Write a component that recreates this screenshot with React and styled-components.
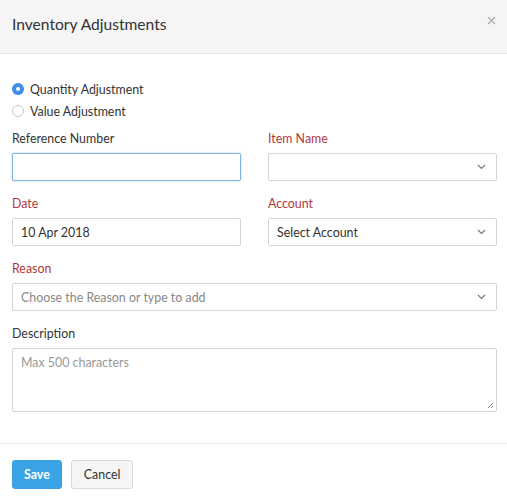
import React from "react";
import styled, { createGlobalStyle } from "styled-components";

const Global = createGlobalStyle`
  html, body { margin: 0; padding: 0; background: #fff; }
  body { font-family: Lato, "Open Sans", "Liberation Sans", sans-serif; color: #333; }
  * { box-sizing: border-box; }
`;

const Modal = styled.div`
  width: 507px;
  height: 501px;
  background: #fff;
  display: flex;
  flex-direction: column;
  overflow: hidden;
`;

const Header = styled.div`
  flex-shrink: 0;
  height: 54px;
  background: #f5f5f5;
  border-bottom: 1px solid #e8e8e8;
  display: flex;
  align-items: center;
  justify-content: space-between;
  padding: 0 10px 6px 12px;
`;

const Title = styled.h1`
  margin: 0;
  font-size: 15.6px;
  font-weight: 400;
  color: #333;
`;

const Close = styled.button`
  border: 0;
  background: none;
  padding: 0;
  width: 12px;
  height: 12px;
  display: flex;
  align-items: center;
  justify-content: center;
  margin-top: -6px;
  cursor: pointer;
`;

const Body = styled.div`
  flex-shrink: 0;
  padding: 24px 10px 31px 12px;
  display: flex;
  flex-direction: column;
`;

const RadioRow = styled.label`
  display: flex;
  align-items: center;
  height: 22px;
  font-size: 12.4px;
  color: #333;
  gap: 6px;
`;

const RadioDot = styled.span`
  width: 12px;
  height: 12px;
  border-radius: 50%;
  border: ${(p) => (p.$on ? "none" : "1px solid #c8c8c8")};
  background: ${(p) => (p.$on ? "#3d8ee8" : "#fff")};
  display: flex;
  align-items: center;
  justify-content: center;
  &::after {
    content: "";
    width: 4px;
    height: 4px;
    border-radius: 50%;
    background: #fff;
    display: ${(p) => (p.$on ? "block" : "none")};
  }
`;

const Grid = styled.div`
  margin-top: 8px;
  display: grid;
  grid-template-columns: 229px 229px;
  column-gap: 27px;
  row-gap: 14px;
`;

const Field = styled.div`
  display: flex;
  flex-direction: column;
  grid-column: ${(p) => (p.$wide ? "1 / -1" : "auto")};
`;

const Label = styled.div`
  font-size: 12.4px;
  line-height: 17px;
  height: 17px;
  margin-bottom: 6px;
  color: ${(p) => (p.$req ? "#b0373a" : "#333")};
`;

const Input = styled.div`
  height: 28px;
  border: 1px solid ${(p) => (p.$focus ? "#7fb4e6" : "#d4d4d4")};
  box-shadow: ${(p) => (p.$focus ? "0 0 2px rgba(80,150,230,0.5)" : "none")};
  border-radius: 2px;
  background: #fff;
  display: flex;
  align-items: center;
  justify-content: space-between;
  padding: 0 10px 0 8px;
  font-size: 12.4px;
  color: ${(p) => (p.$placeholder ? "#888" : "#333")};
`;

const TextArea = styled.div`
  position: relative;
  height: 64px;
  border: 1px solid #d4d4d4;
  border-radius: 2px;
  padding: 6px 8px;
  font-size: 12.4px;
  color: #999;
`;

const Grip = styled.svg`
  position: absolute;
  right: 2px;
  bottom: 2px;
`;

const Footer = styled.div`
  flex: 1;
  border-top: 1px solid #ececec;
  padding: 16px 12px 0;
  display: flex;
  align-items: flex-start;
  gap: 9px;
`;

const Button = styled.button`
  height: 29px;
  padding: 0 ${(p) => (p.$primary ? "11px" : "12px")};
  border-radius: 3px;
  font-family: inherit;
  font-size: 12.4px;
  border: 1px solid ${(p) => (p.$primary ? "#3a9de0" : "#d9d9d9")};
  background: ${(p) => (p.$primary ? "#3aa3e6" : "#f5f5f5")};
  color: ${(p) => (p.$primary ? "#fff" : "#333")};
  font-weight: ${(p) => (p.$primary ? 700 : 400)};
  cursor: pointer;
`;

const Chevron = () => (
  <svg width="9" height="6" viewBox="0 0 9 6">
    <path d="M1 1l3.5 3.5L8 1" fill="none" stroke="#777" strokeWidth="1.2" />
  </svg>
);

export default function App() {
  return (
    <>
      <Global />
      <Modal>
        <Header>
          <Title>Inventory Adjustments</Title>
          <Close aria-label="close">
            <svg width="9" height="9" viewBox="0 0 9 9">
              <path d="M1 1l7 7M8 1l-7 7" stroke="#aaa" strokeWidth="1.2" />
            </svg>
          </Close>
        </Header>
        <Body>
          <RadioRow>
            <RadioDot $on />
            Quantity Adjustment
          </RadioRow>
          <RadioRow>
            <RadioDot />
            Value Adjustment
          </RadioRow>
          <Grid>
            <Field>
              <Label>Reference Number</Label>
              <Input $focus />
            </Field>
            <Field>
              <Label $req>Item Name</Label>
              <Input>
                <span />
                <Chevron />
              </Input>
            </Field>
            <Field>
              <Label $req>Date</Label>
              <Input>10 Apr 2018</Input>
            </Field>
            <Field>
              <Label $req>Account</Label>
              <Input>
                <span>Select Account</span>
                <Chevron />
              </Input>
            </Field>
            <Field $wide>
              <Label $req>Reason</Label>
              <Input $placeholder>
                <span>Choose the Reason or type to add</span>
                <Chevron />
              </Input>
            </Field>
            <Field $wide>
              <Label>Description</Label>
              <TextArea>
                Max 500 characters
                <Grip width="7" height="7" viewBox="0 0 7 7">
                  <path d="M6 1L1 6M6 4L4 6" stroke="#888" strokeWidth="1" />
                </Grip>
              </TextArea>
            </Field>
          </Grid>
        </Body>
        <Footer>
          <Button $primary>Save</Button>
          <Button>Cancel</Button>
        </Footer>
      </Modal>
    </>
  );
}
